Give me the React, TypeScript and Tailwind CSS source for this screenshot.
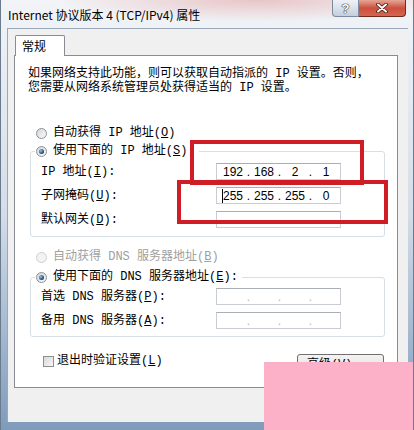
import { Fragment } from 'react';

/**
 * TCP/IPv4 properties dialog (Win7 look)
 */

function Radio({ checked, disabled }: { checked?: boolean; disabled?: boolean }) {
  return (
    <span
      className={
        disabled
          ? 'flex h-[11px] w-[11px] shrink-0 items-center justify-center rounded-full border border-[#cfcfcf] bg-[#f3f3f3]'
          : 'flex h-[11px] w-[11px] shrink-0 items-center justify-center rounded-full border border-[#8b8e92] bg-gradient-to-br from-[#d4d6d9] to-[#fbfbfb]'
      }
    >
      {checked && (
        <span className="h-[5px] w-[5px] rounded-full bg-[radial-gradient(circle_at_35%_35%,#8fc2ec,#14385e_75%)]" />
      )}
    </span>
  );
}

function IpBox({ parts, caret }: { parts?: string[]; caret?: boolean }) {
  return (
    <div className="flex h-[17px] w-[125px] items-center border border-[#c9ccd2] border-t-[#a9adb5] bg-white pl-[4px] font-['Liberation_Sans',sans-serif] text-[12px] leading-none">
      {[0, 1, 2, 3].map((i) => (
        <Fragment key={i}>
          <span className="relative w-[24px] text-center">
            {caret && i === 0 && <span className="absolute left-[1px] top-[-1px] h-[14px] w-px bg-black" />}
            {parts ? parts[i] : ''}
          </span>
          {i < 3 && (
            <span className={parts ? 'w-[7px] text-center' : 'w-[7px] text-center text-[#b4b4b4]'}>.</span>
          )}
        </Fragment>
      ))}
    </div>
  );
}

function Field({ label, parts, caret }: { label: React.ReactNode; parts?: string[]; caret?: boolean }) {
  return (
    <div className="flex h-[17px] items-center pl-[10px]">
      <span className="w-[175px] whitespace-nowrap">{label}</span>
      <IpBox parts={parts} caret={caret} />
    </div>
  );
}

function Key({ k }: { k: string }) {
  return (
    <>
      (<span className="underline underline-offset-1">{k}</span>)
    </>
  );
}

export default function App() {
  return (
    <div className="relative h-[430px] w-[414px] overflow-hidden border-x border-[#6a7b8e] bg-gradient-to-b from-[#f2f4f7] via-[#d3dde8] to-[#7f9bbb] text-black">
      {/* glass reflection */}
      <div className="absolute inset-x-0 top-0 h-[28px] bg-[radial-gradient(ellipse_at_62%_0%,rgba(214,110,110,0.35),transparent_55%)]" />

      {/* Title bar */}
      <div className="relative flex h-[28px] items-start">
        <span className="ml-[7px] mt-[6px] whitespace-nowrap font-['Noto_Sans_CJK_SC',sans-serif] text-[12px] leading-[18px]">
          Internet 协议版本 4 (TCP/IPv4) 属性
        </span>
        <div className="ml-auto mr-[7px] flex">
          <div className="flex h-[17px] w-[27px] items-center justify-center rounded-bl-[4px] border border-t-0 border-[#7d8b9c] bg-gradient-to-b from-[#eef2f6] via-[#d9e1ea] to-[#c3cfdc] font-['Liberation_Sans',sans-serif] text-[13px] font-bold leading-none text-white [text-shadow:0_0_1px_#2b2b2b,0_0_1px_#2b2b2b,0_0_1px_#2b2b2b]">
            ?
          </div>
          <div className="flex h-[17px] w-[47px] items-center justify-center rounded-br-[4px] border border-l-0 border-t-0 border-[#6f2a22] bg-gradient-to-b from-[#e6a596] via-[#c9503d] to-[#d8644f]">
            <svg width="12" height="10" viewBox="0 0 12 10">
              <path d="M2 1.5 L10 8.5 M10 1.5 L2 8.5" stroke="#3a1a16" strokeWidth="3.6" strokeLinecap="round" />
              <path d="M2 1.5 L10 8.5 M10 1.5 L2 8.5" stroke="#ffffff" strokeWidth="2" strokeLinecap="round" />
            </svg>
          </div>
        </div>
      </div>

      {/* Client area */}
      <div className="ml-[6px] h-[394px] w-[401px] border-l border-t border-[#9aa8b8] bg-[#f0f0f0] pl-[6px] pt-[6px] font-['Liberation_Mono','Noto_Sans_CJK_SC',monospace] text-[12px] leading-[16px]">
        {/* Tab */}
        <div className="relative z-10 -mb-px ml-px flex h-[21px] w-[50px] items-center rounded-t-[2px] border border-b-0 border-[#898c95] bg-white pl-[6px] font-['Noto_Sans_CJK_SC',sans-serif]">
          常规
        </div>

        {/* Tab panel */}
        <div className="flex h-[333px] w-[384px] flex-col border border-[#898c95] bg-white">
          <div className="pl-[13px] pt-[11px] leading-[14px]">
            <div className="whitespace-nowrap">如果网络支持此功能，则可以获取自动指派的 IP 设置。否则，</div>
            <div className="whitespace-nowrap">您需要从网络系统管理员处获得适当的 IP 设置。</div>
          </div>

          <div className="mt-[30px] flex h-[16px] items-center gap-[6px] pl-[21px]">
            <Radio />
            <span className="whitespace-nowrap">自动获得 IP 地址<Key k="O" /></span>
          </div>

          <fieldset className="ml-[15px] mt-[2px] flex w-[355px] flex-col gap-[7px] rounded-[3px] border border-[#d5dfe5] pb-[8px]">
            <legend className="ml-[4px] flex h-[16px] items-center gap-[6px] pl-px pr-[4px]">
              <Radio checked />
              <span className="whitespace-nowrap">使用下面的 IP 地址<Key k="S" />:</span>
            </legend>
            <div className="mt-[4px]">
              <Field label={<>IP 地址<Key k="I" />:</>} parts={['192', '168', '2', '1']} />
            </div>
            <Field label={<>子网掩码<Key k="U" />:</>} parts={['255', '255', '255', '0']} caret />
            <Field label={<>默认网关<Key k="D" />:</>} />
          </fieldset>

          <div className="mt-[12px] flex h-[16px] items-center gap-[6px] pl-[21px] text-[#a0a0a0]">
            <Radio disabled />
            <span className="whitespace-nowrap">自动获得 DNS 服务器地址<Key k="B" /></span>
          </div>

          <fieldset className="ml-[15px] mt-[4px] flex w-[355px] flex-col gap-[7px] rounded-[3px] border border-[#d5dfe5] pb-[7px]">
            <legend className="ml-[4px] flex h-[16px] items-center gap-[6px] pl-px pr-[4px]">
              <Radio checked />
              <span className="whitespace-nowrap">使用下面的 DNS 服务器地址<Key k="E" />:</span>
            </legend>
            <div className="mt-[3px]">
              <Field label={<>首选 DNS 服务器<Key k="P" />:</>} />
            </div>
            <Field label={<>备用 DNS 服务器<Key k="A" />:</>} />
          </fieldset>

          <div className="mt-[16px] flex items-start pl-[28px] pr-[13px]">
            <div className="flex h-[16px] items-center gap-[3px]">
              <span className="h-[11px] w-[11px] border border-[#8e8f8f] bg-gradient-to-br from-[#d9d9d9] to-[#f7f7f7]" />
              <span className="whitespace-nowrap">退出时验证设置<Key k="L" /></span>
            </div>
            <div className="ml-auto mt-[1px] flex h-[23px] w-[87px] items-start justify-center rounded-[3px] border border-[#707070] bg-gradient-to-b from-[#f3f3f3] to-[#dcdcdc] pt-[2px]">
              <span className="whitespace-nowrap">高级<Key k="V" />...</span>
            </div>
          </div>
        </div>
      </div>

      {/* annotations */}
      <div className="absolute left-[189px] top-[140px] h-[45px] w-[174px] border-4 border-[#d01c24]" />
      <div className="absolute left-[176px] top-[180px] h-[44px] w-[211px] border-4 border-[#d01c24]" />

      {/* pink overlay block */}
      <div className="absolute left-[263px] top-[362px] h-[68px] w-[151px] bg-[#fdb1c8]" />
    </div>
  );
}
